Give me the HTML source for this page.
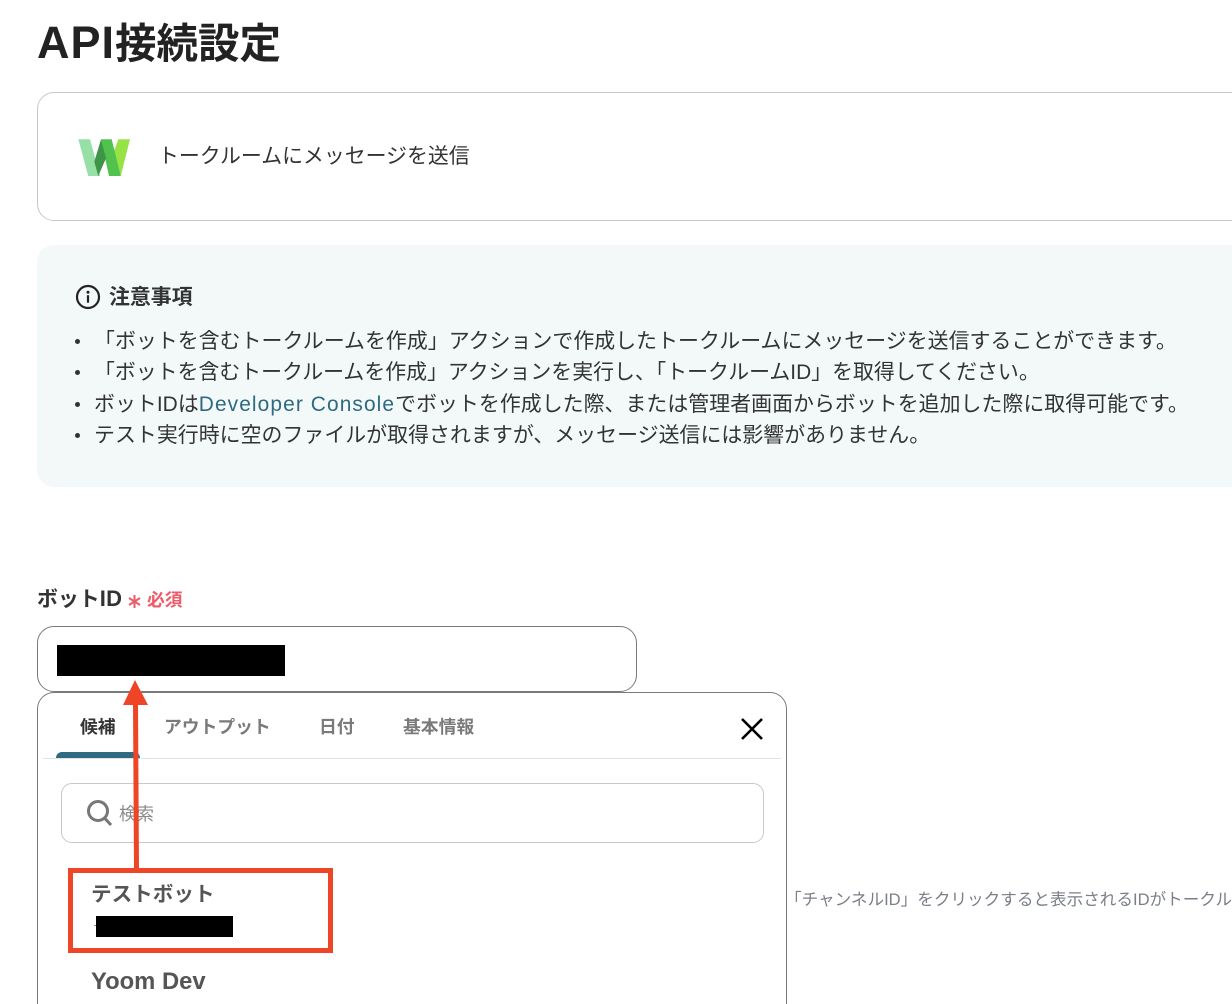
<!DOCTYPE html>
<html lang="ja"><head><meta charset="utf-8"><style>
html,body{margin:0;padding:0;width:1232px;height:1004px;overflow:hidden;background:#fff}
body{position:relative;font-family:"Liberation Sans","Noto Sans CJK JP",sans-serif;color:#2b2b2b}
.a{position:absolute;white-space:nowrap}
.l{font-size:20.9px;line-height:30px;color:#333;letter-spacing:.05px}
.d{position:absolute;width:5px;height:5px;border-radius:50%;background:#333;left:75px}
.s{letter-spacing:1.1px}
</style></head><body>
<div class="a" style="left:37px;top:17px;font-size:41.5px;line-height:52px;font-weight:700;color:#222"><span style="font-size:45px;letter-spacing:1px">API</span>接続設定</div>
<div class="a" style="left:37px;top:92px;width:1300px;height:127px;border:1px solid #c8c8c8;border-radius:17px"></div>
<svg class="a" style="left:78px;top:139px" width="54" height="38" viewBox="0 0 54 38">
<path d="M40.3 .3H52L42.7 37L35.3 14.3Z" fill="#97e245"/>
<path d="M23 .3H33.7L42.7 37H31Z" fill="#52c24f"/>
<path d="M.3 .3H12L22 37H10.3Z" fill="#96e0a8"/>
<path d="M23 .3L16.3 22.7L20.3 37L28 19.3Z" fill="#3f9447"/>
</svg>
<div class="a" style="left:158px;top:142px;font-size:20.9px;line-height:30px;color:#333">トークルームにメッセージを送信</div>
<div class="a" style="left:37px;top:245px;width:1300px;height:242px;background:#f3f9f9;border-radius:17px"></div>
<svg class="a" style="left:75px;top:284px" width="26" height="26" viewBox="0 0 26 26" fill="none">
<circle cx="13" cy="13" r="11" stroke="#222" stroke-width="2.2"/>
<circle cx="13" cy="8.2" r="1.5" fill="#222"/><rect x="11.9" y="11.2" width="2.2" height="7.5" fill="#222"/>
</svg>
<div class="a" style="left:109px;top:283px;font-size:20.9px;font-weight:700;line-height:30px;color:#333">注意事項</div>
<div class="d" style="top:339px"></div>
<div class="d" style="top:370px"></div>
<div class="d" style="top:402px"></div>
<div class="d" style="top:433px"></div>
<div class="a l" style="left:94px;top:327px">「ボットを含むトークルームを作成」アクションで作成したトークルームにメッセージを送信することができます。</div>
<div class="a l" style="left:94px;top:358px;letter-spacing:0">「ボットを含むトークルームを作成」アクションを実行し、「トークルームID」を取得してください。</div>
<div class="a l" style="left:94px;top:390px">ボットIDは<span class="s" style="color:#2e6a80">Developer Console</span>でボットを作成した際、または管理者画面からボットを追加した際に取得可能です。</div>
<div class="a l" style="left:94px;top:421px">テスト実行時に空のファイルが取得されますが、メッセージ送信には影響がありません。</div>
<div class="a" style="left:37px;top:584px;font-size:20.9px;font-weight:700;line-height:30px;color:#333">ボット<span style="font-size:22px;letter-spacing:.3px">ID</span></div>
<svg class="a" style="left:127px;top:594px" width="15" height="15" viewBox="0 0 15 15" fill="none" stroke="#ee5a68" stroke-width="2"><path d="M7.5 1V14M2 4L13 11M13 4L2 11"/></svg>
<div class="a" style="left:147px;top:585px;font-size:17.8px;font-weight:700;line-height:30px;color:#ee5a68">必須</div>
<div class="a" style="left:37px;top:626px;width:598px;height:64px;border:1px solid #7a7a7a;border-radius:17px"></div>
<div class="a" style="left:57px;top:645px;width:228px;height:31px;background:#000"></div>
<div class="a" style="left:37px;top:692px;width:748px;height:340px;border:1px solid #7a7a7a;border-radius:17px;background:#fff"></div>
<div class="a" style="left:80px;top:712px;font-size:17.8px;font-weight:700;line-height:30px;color:#333">候補</div>
<div class="a" style="left:164px;top:712px;font-size:17.8px;font-weight:700;line-height:30px;color:#7a7a7a">アウトプット</div>
<div class="a" style="left:319px;top:712px;font-size:17.8px;font-weight:700;line-height:30px;color:#7a7a7a">日付</div>
<div class="a" style="left:403px;top:712px;font-size:17.8px;font-weight:700;line-height:30px;color:#7a7a7a">基本情報</div>
<div class="a" style="left:43px;top:758px;width:738px;height:1px;background:#e2e2e2"></div>
<div class="a" style="left:56px;top:752px;width:84px;height:6px;background:#2e6a80;border-radius:6px 6px 0 0"></div>
<svg class="a" style="left:740px;top:717px" width="24" height="24" viewBox="0 0 24 24"><path d="M2 2L22 22M22 2L2 22" stroke="#000" stroke-width="2.6"/></svg>
<div class="a" style="left:61px;top:783px;width:701px;height:58px;border:1px solid #c8c8c8;border-radius:11px"></div>
<svg class="a" style="left:86px;top:799px" width="26" height="28" viewBox="0 0 26 28" fill="none"><circle cx="12" cy="12" r="9.5" stroke="#777" stroke-width="3"/><path d="M18.5 19L25 26" stroke="#777" stroke-width="3"/></svg>
<div class="a" style="left:119px;top:799px;font-size:17.5px;line-height:30px;color:#8a8a8a">検索</div>
<div class="a" style="left:91px;top:880px;font-size:20.6px;font-weight:700;line-height:30px;color:#555">テストボット</div>
<div class="a" style="left:94px;top:925px;width:3px;height:1px;background:#888"></div>
<div class="a" style="left:96px;top:916px;width:137px;height:21px;background:#000"></div>
<div class="a" style="left:91px;top:967px;font-size:23.8px;font-weight:700;line-height:30px;color:#555">Yoom Dev</div>
<div class="a" style="left:785px;top:885px;font-size:16.6px;line-height:30px;color:#7a7f87">「チャンネルID」をクリックすると表示されるIDがトークル</div>
<svg class="a" style="left:0;top:0" width="1232" height="1004" fill="none">
<path d="M136.5 869L135.5 704" stroke="#ee4526" stroke-width="5"/>
<path d="M135 680L123 705H148Z" fill="#ee4526"/>
<rect x="70.5" y="870.5" width="260" height="80" stroke="#ee4526" stroke-width="5"/>
</svg>
</body></html>
